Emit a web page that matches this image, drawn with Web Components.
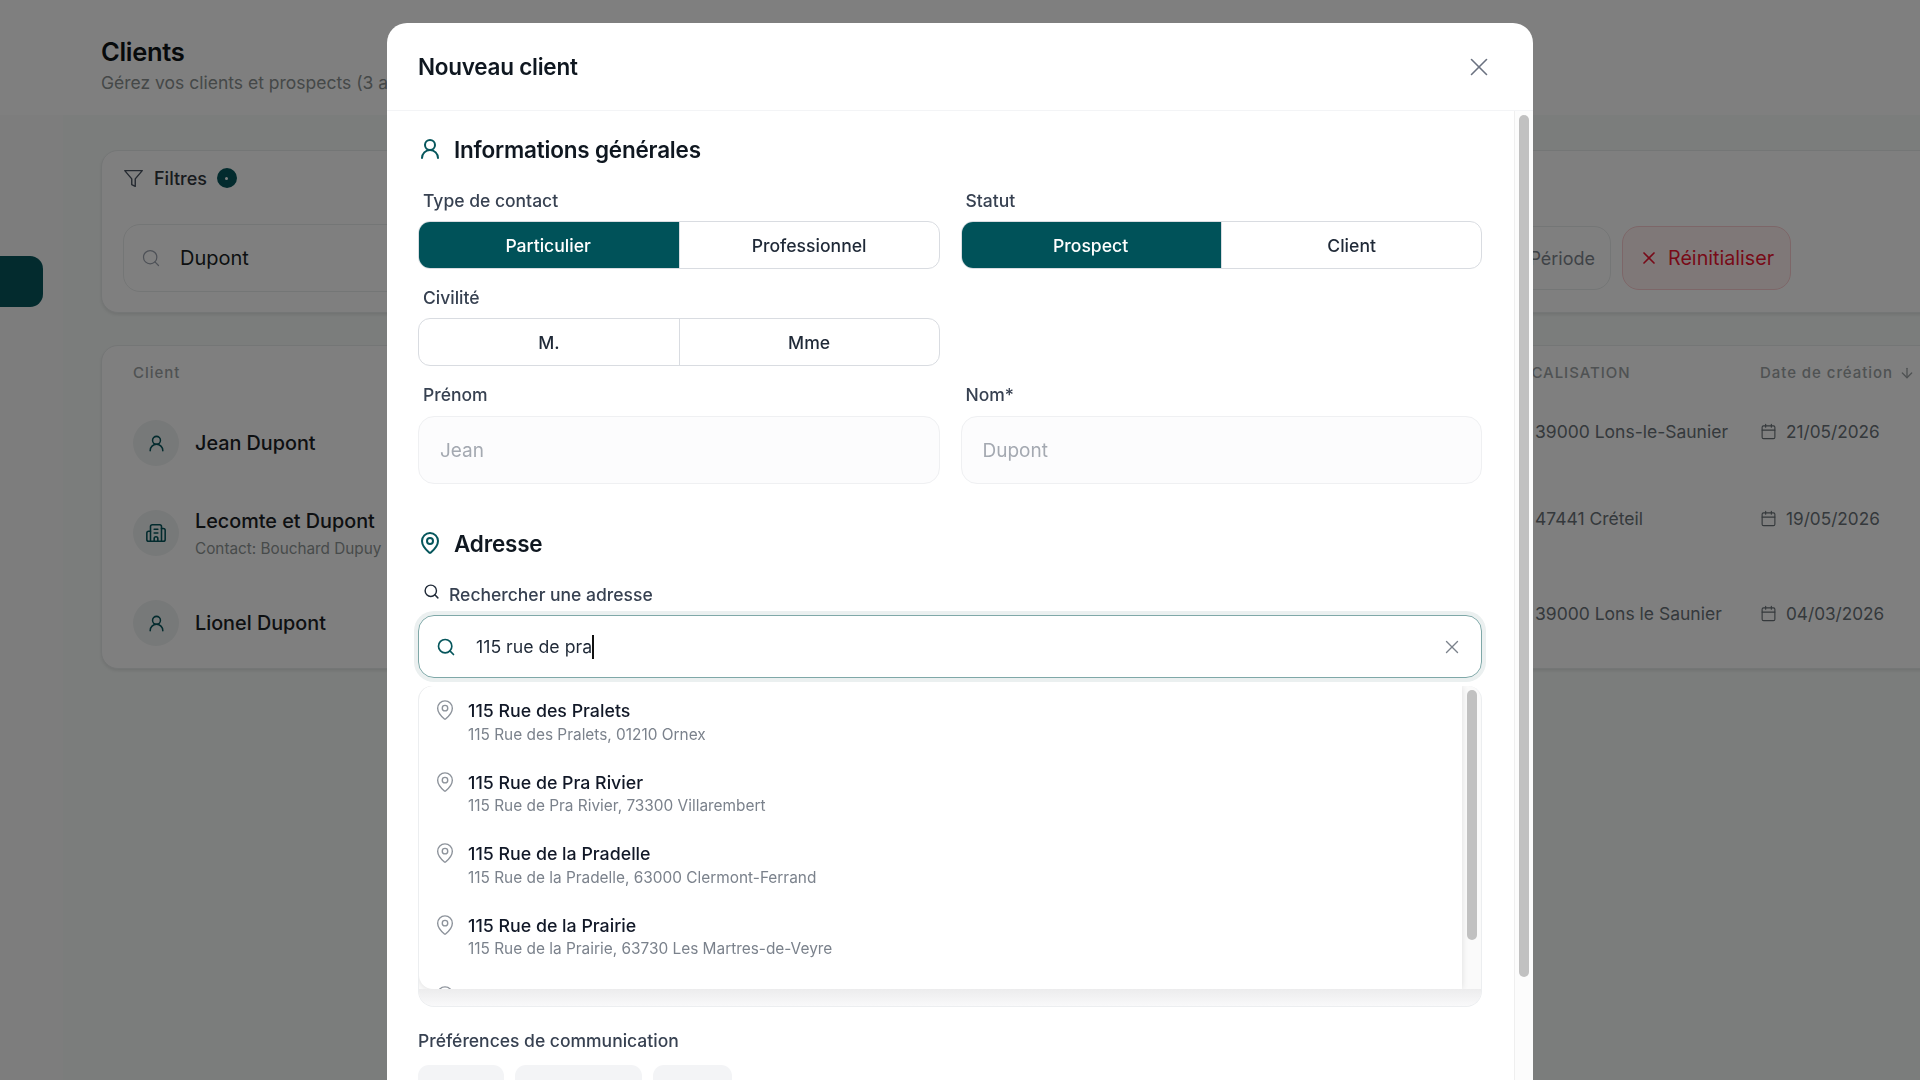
<!DOCTYPE html>
<html lang="fr">
<head>
<meta charset="utf-8">
<title>Clients</title>
<style>
  html, body { margin: 0; height: 1080px; overflow: hidden; background: #fff; }
  body { font-family: Inter, "Liberation Sans", sans-serif; color: #111827; }
</style>
</head>
<body>
<clients-page>
  <client-row slot="rows" name="Jean Dupont" city="39000 Lons-le-Saunier" date="21/05/2026" icon="user" height="88" top="20"></client-row>
  <client-row slot="rows" name="Lecomte et Dupont" contact="Contact: Bouchard Dupuy" city="47441 Créteil" date="19/05/2026" icon="building" height="91" top="19"></client-row>
  <client-row slot="rows" name="Lionel Dupont" city="39000 Lons le Saunier" date="04/03/2026" icon="user" height="90" top="23"></client-row>
</clients-page>

<client-modal heading="Nouveau client">
  <section-heading icon="user">Informations générales</section-heading>
  <div style="display:grid;grid-template-columns:1fr 1fr;column-gap:21px;margin-top:24px">
    <form-field label="Type de contact">
      <seg-group><seg-btn active>Particulier</seg-btn><seg-btn>Professionnel</seg-btn></seg-group>
    </form-field>
    <form-field label="Statut">
      <seg-group><seg-btn active>Prospect</seg-btn><seg-btn>Client</seg-btn></seg-group>
    </form-field>
  </div>
  <div style="display:grid;grid-template-columns:1fr 1fr;column-gap:21px;margin-top:17px">
    <form-field label="Civilité">
      <seg-group><seg-btn>M.</seg-btn><seg-btn>Mme</seg-btn></seg-group>
    </form-field>
  </div>
  <div style="display:grid;grid-template-columns:1fr 1fr;column-gap:21px;margin-top:17px">
    <form-field label="Prénom" gap="9"><text-input>Jean</text-input></form-field>
    <form-field label="Nom*" gap="9"><text-input>Dupont</text-input></form-field>
  </div>
  <section-heading icon="pin" style="margin-top:43px">Adresse</section-heading>
  <address-search value="115 rue de pra" style="margin-top:23px">
    <address-item name="115 Rue des Pralets" detail="115 Rue des Pralets, 01210 Ornex"></address-item>
    <address-item name="115 Rue de Pra Rivier" detail="115 Rue de Pra Rivier, 73300 Villarembert"></address-item>
    <address-item name="115 Rue de la Pradelle" detail="115 Rue de la Pradelle, 63000 Clermont-Ferrand"></address-item>
    <address-item name="115 Rue de la Prairie" detail="115 Rue de la Prairie, 63730 Les Martres-de-Veyre"></address-item>
    <address-item></address-item>
  </address-search>
  <contact-prefs label="Préférences de communication" style="margin-top:22px">
    <span>Email</span><span>Téléphone</span><span>SMS</span>
  </contact-prefs>
</client-modal>

<script>
const ICONS = {
  user: '<circle cx="12" cy="8" r="5"/><path d="M20 21a8 8 0 0 0-16 0"/>',
  pin: '<path d="M20 10c0 4.993-5.539 10.193-7.399 11.799a1 1 0 0 1-1.202 0C9.539 20.193 4 14.993 4 10a8 8 0 0 1 16 0"/><circle cx="12" cy="10" r="3"/>',
  search: '<circle cx="11" cy="11" r="8"/><path d="m21 21-4.3-4.3"/>',
  x: '<path d="M18 6 6 18"/><path d="m6 6 12 12"/>',
  filter: '<polygon points="22 3 2 3 10 12.46 10 19 14 21 14 12.46 22 3"/>',
  calendar: '<path d="M8 2v4"/><path d="M16 2v4"/><rect width="18" height="18" x="3" y="4" rx="2"/><path d="M3 10h18"/>',
  building: '<path d="M10 12h4"/><path d="M10 8h4"/><path d="M14 21v-3a2 2 0 0 0-2-2 2 2 0 0 0-2 2v3"/><path d="M6 10H4a2 2 0 0 0-2 2v7a2 2 0 0 0 2 2h16a2 2 0 0 0 2-2V9a2 2 0 0 0-2-2h-2"/><path d="M6 21V5a2 2 0 0 1 2-2h8a2 2 0 0 1 2 2v16"/>',
  down: '<path d="M12 5v14"/><path d="m19 12-7 7-7-7"/>',
  chevron: '<path d="m6 9 6 6 6-6"/>'
}

class UiIcon extends HTMLElement {
  connectedCallback () {
    const size = this.getAttribute('size') || 20
    const stroke = this.getAttribute('stroke') || 2
    this.attachShadow({ mode: 'open' }).innerHTML = `
      <style>:host { display: inline-flex; flex: none; } svg { display: block; }</style>
      <svg xmlns="http://www.w3.org/2000/svg" width="${size}" height="${size}" viewBox="0 0 24 24" fill="none"
        stroke="currentColor" stroke-width="${stroke}" stroke-linecap="round" stroke-linejoin="round">${ICONS[this.getAttribute('name')]}</svg>`
  }
}

class ClientsPage extends HTMLElement {
  connectedCallback () {
    this.attachShadow({ mode: 'open' }).innerHTML = `
      <style>
        :host { display: grid; grid-template-columns: 63px 1fr; width: 1920px; height: 1080px; overflow: hidden; background: #fbfbfb; }
        .side { display: flex; flex-direction: column; }
        .side .top { width: 43px; height: 107px; background: #f7f7f7; display: flex; align-items: center; justify-content: center; color: #6b7280; box-sizing: border-box; padding-top: 27px; }
        .side .active { width: 43px; height: 51px; margin-top: 149px; background: #06565c; border-radius: 0 13px 13px 0; }
        main { min-width: 0; }
        header { height: 115px; padding: 36px 0 0 101px; box-sizing: border-box; background: #fff; margin-left: -63px; }
        h1 { margin: 0; font-size: 25.5px; line-height: 32px; font-weight: 600; color: #0f1417; letter-spacing: -0.3px; }
        header p { margin: 2px 0 0; font-size: 17.5px; line-height: 26px; color: #8a9191; }
        .content { background: #f6faf8; height: 965px; padding: 35px 0 0 38px; box-sizing: border-box; }
        .card { background: #fff; border: 1px solid #e9ecec; border-radius: 17px; margin-right: -40px; box-shadow: 0 2px 3px rgba(0,0,0,.08); }
        .filters { height: 163px; box-sizing: border-box; padding: 16px 0 0 21px; }
        .filters .head { display: flex; align-items: center; height: 22px; font-size: 18px; color: #30363c; font-weight: 500; }
        .filters .head ui-icon { margin-right: 10px; color: #4b5563; }
        .badge { width: 20px; height: 20px; margin-left: 10px; border-radius: 50%; background: #06565c; display: flex; align-items: center; justify-content: center; }
        .badge i { width: 3px; height: 3px; border-radius: 50%; background: #fff; }
        .filters .row { display: flex; align-items: center; gap: 11px; margin-top: 35px; padding-right: 168px; }
        .search { flex: 1; height: 68px; box-sizing: border-box; border: 1px solid #e9ecec; border-radius: 17px; display: flex; align-items: center; gap: 19px; padding-left: 17px; font-size: 20px; color: #1a1f24; }
        .search ui-icon { color: #9ca3af; }
        .pick { height: 64px; width: 200px; box-sizing: border-box; border: 1px solid #e9ecec; border-radius: 17px; display: flex; align-items: center; justify-content: flex-end; padding-right: 15px; font-size: 18px; color: #7e868e; }
        .reset { height: 64px; width: 169px; box-sizing: border-box; border: 1px solid #fbcdd0; background: #fff1f1; border-radius: 17px; display: flex; align-items: center; gap: 9px; padding-left: 16px; font-size: 19.7px; color: #f01530; }
        .table { height: 322px; margin-top: 32px; overflow: hidden; }
        .cols { display: grid; grid-template-columns: 1377px 250px 1fr; height: 53px; align-items: center; padding-left: 31px; font-size: 15px; font-weight: 500; letter-spacing: .95px; color: #9ea4a6; }
        .cols span:last-child { display: flex; align-items: center; gap: 6px; }
      </style>
      <div class="side">
        <div class="top"><ui-icon name="chevron" size="18" stroke="1.5"></ui-icon></div>
        <div class="active"></div>
      </div>
      <main>
        <header><h1>Clients</h1><p>Gérez vos clients et prospects (3 au total)</p></header>
        <div class="content">
          <div class="card filters">
            <div class="head"><ui-icon name="filter" size="21" stroke="1.6"></ui-icon>Filtres<span class="badge"><i></i></span></div>
            <div class="row">
              <div class="search"><ui-icon name="search" size="20" stroke="1.5"></ui-icon>Dupont</div>
              <div class="pick">Période</div>
              <div class="reset"><ui-icon name="x" size="20"></ui-icon>Réinitialiser</div>
            </div>
          </div>
          <div class="card table">
            <div class="cols"><span>Client</span><span>LOCALISATION</span><span>Date de création <ui-icon name="down" size="16"></ui-icon></span></div>
            <slot name="rows"></slot>
          </div>
        </div>
      </main>`
  }
}

class ClientRow extends HTMLElement {
  connectedCallback () {
    const a = n => this.getAttribute(n)
    const building = a('icon') === 'building'
    this.attachShadow({ mode: 'open' }).innerHTML = `
      <style>
        :host { display: grid; grid-template-columns: 1377px 250px 1fr; padding-left: 31px; height: ${a('height')}px; }
        .who { display: flex; align-items: center; gap: 16px; }
        .avatar { width: 46px; height: 46px; border-radius: 50%; background: #eff2f2; color: #06565c; display: flex; align-items: center; justify-content: center; }
        .name { font-size: 19.8px; line-height: 28px; font-weight: 500; color: #1a2024; }
        .contact { font-size: 15.3px; line-height: 20px; margin-top: 4px; color: #8f9696; }
        .cell { display: flex; align-items: center; gap: 7px; height: 24px; margin-top: ${a('top')}px; font-size: 17.5px; color: #6a7278; }
        .date { gap: 9px; font-size: 17.2px; }
      </style>
      <div class="who">
        <div class="avatar"><ui-icon name="${a('icon')}" size="${building ? 22 : 19}" stroke="${building ? 1.7 : 1.9}"></ui-icon></div>
        <div><div class="name">${a('name')}</div>${a('contact') ? `<div class="contact">${a('contact')}</div>` : ''}</div>
      </div>
      <div class="cell"><ui-icon name="pin" size="18"></ui-icon>${a('city')}</div>
      <div class="cell date"><ui-icon name="calendar" size="17" stroke="1.6"></ui-icon>${a('date')}</div>`
  }
}

class ClientModal extends HTMLElement {
  connectedCallback () {
    this.attachShadow({ mode: 'open' }).innerHTML = `
      <style>
        :host { position: fixed; inset: 0; display: flex; justify-content: center; padding-top: 23px; box-sizing: border-box; background: rgba(0, 0, 0, .5); }
        .dialog { width: 1146px; height: 1100px; background: #fff; border-radius: 20px 20px 0 0; display: flex; flex-direction: column; overflow: hidden; }
        header { height: 88px; flex: none; box-sizing: border-box; border-bottom: 1px solid #f3f4f6; display: flex; align-items: center; justify-content: space-between; padding: 0 39px 0 31px; }
        h2 { margin: 0; font-size: 22.5px; font-weight: 600; color: #0f1720; letter-spacing: -0.25px; }
        header ui-icon { color: #6b7280; }
        .body { flex: 1; display: flex; min-height: 0; }
        .scroll { flex: 1; min-width: 0; padding: 22px 32px 0 31px; box-sizing: border-box; }
        .track { width: 19px; flex: none; box-sizing: border-box; border-left: 1px solid #efefef; background: #fcfcfc; padding: 4px 4px 0; }
        .thumb { height: 862px; border-radius: 5px; background: #c1c1c1; }
      </style>
      <div class="dialog">
        <header><h2>${this.getAttribute('heading')}</h2><ui-icon name="x" size="30" stroke="1.3"></ui-icon></header>
        <div class="body">
          <div class="scroll"><slot></slot></div>
          <div class="track"><div class="thumb"></div></div>
        </div>
      </div>`
  }
}

class SectionHeading extends HTMLElement {
  connectedCallback () {
    this.attachShadow({ mode: 'open' }).innerHTML = `
      <style>
        :host { display: flex; align-items: center; gap: 12px; height: 32px; font-size: 22.5px; font-weight: 600; color: #0f1720; letter-spacing: -0.2px; }
        ui-icon { color: #06565c; }
      </style>
      <ui-icon name="${this.getAttribute('icon')}" size="24"></ui-icon><slot></slot>`
  }
}

class FormField extends HTMLElement {
  connectedCallback () {
    this.attachShadow({ mode: 'open' }).innerHTML = `
      <style>
        :host { display: block; }
        label { display: block; height: 24px; line-height: 24px; padding-left: 5px; margin-bottom: ${this.getAttribute('gap') || 8}px; font-size: 17.5px; font-weight: 500; color: #374151; }
      </style>
      <label>${this.getAttribute('label')}</label><slot></slot>`
  }
}

class SegGroup extends HTMLElement {
  connectedCallback () {
    this.attachShadow({ mode: 'open' }).innerHTML = `
      <style>
        :host { display: grid; grid-template-columns: 1fr 1fr; height: 48px; box-sizing: border-box; border: 1.5px solid #d9dce1; border-radius: 12px; overflow: hidden; }
      </style>
      <slot></slot>`
  }
}

class SegBtn extends HTMLElement {
  connectedCallback () {
    this.attachShadow({ mode: 'open' }).innerHTML = `
      <style>
        :host { display: flex; align-items: center; justify-content: center; font-size: 17.6px; font-weight: 500; color: #1f2937; }
        :host(:nth-child(2)) { border-left: 1px solid #d9dce1; }
        :host([active]) { background: #005259; color: #fff; margin: -1.5px 0 -1.5px -1.5px; }
      </style>
      <slot></slot>`
  }
}

class TextInput extends HTMLElement {
  connectedCallback () {
    this.attachShadow({ mode: 'open' }).innerHTML = `
      <style>
        :host { display: flex; align-items: center; height: 68px; box-sizing: border-box; padding-left: 21px; background: #fcfcfd; border: 1.5px solid #eff0f2; border-radius: 16px; font-size: 19px; color: #a4a9b1; }
      </style>
      <slot></slot>`
  }
}

class AddressSearch extends HTMLElement {
  connectedCallback () {
    this.attachShadow({ mode: 'open' }).innerHTML = `
      <style>
        :host { display: block; }
        .label { display: flex; align-items: center; gap: 9px; height: 24px; padding-left: 5px; font-size: 17.5px; font-weight: 500; color: #374151; }
        .label ui-icon { margin-top: -6px; color: #1f2937; }
        .input { display: flex; align-items: center; height: 63px; margin-top: 9px; box-sizing: border-box; border: 1.5px solid #7fa8a8; border-radius: 16px; box-shadow: 0 0 0 4px #ebf0f0; padding: 0 18px 0 17px; font-size: 17.7px; color: #1f2937; }
        .input .lead { color: #06565c; margin-right: 20px; }
        .input .value { flex: 1; display: flex; align-items: center; }
        .caret { width: 1.5px; height: 24px; background: #111; }
        .input .clear { color: #7b828c; }
        .box { margin-top: 8px; border: 1px solid #eceef0; border-top: 0; border-radius: 14px 14px 16px 16px; display: grid; grid-template-columns: 1fr 19px; grid-template-rows: 303px 17px; overflow: hidden; background: #fafafa; }
        .list { overflow: hidden; background: #fff; box-shadow: 0 0 6px rgba(0,0,0,.12); border-radius: 14px 0 0 14px; }
        .v { padding: 4px 4px 0 5px; }
        .thumb { height: 250px; border-radius: 5px; background: #c1c1c1; }
        .h { grid-column: 1 / 3; background: linear-gradient(#ececed, #f9f9fa); }
      </style>
      <div class="label"><ui-icon name="search" size="17" stroke="2"></ui-icon>Rechercher une adresse</div>
      <div class="input">
        <ui-icon class="lead" name="search" size="20"></ui-icon>
        <div class="value">${this.getAttribute('value')}<span class="caret"></span></div>
        <ui-icon class="clear" name="x" size="22" stroke="1.5"></ui-icon>
      </div>
      <div class="box">
        <div class="list"><slot></slot></div>
        <div class="v"><div class="thumb"></div></div>
        <div class="h"></div>
      </div>`
  }
}

class AddressItem extends HTMLElement {
  connectedCallback () {
    const name = this.getAttribute('name') || ''
    const detail = this.getAttribute('detail') || ''
    this.attachShadow({ mode: 'open' }).innerHTML = `
      <style>
        :host { display: flex; gap: 12px; height: 71.6px; box-sizing: border-box; padding: 13px 0 0 15px; }
        ui-icon { color: #8d939b; }
        .n { height: 24px; line-height: 24px; font-size: 17.8px; font-weight: 500; color: #111827; }
        .d { height: 20px; line-height: 20px; margin-top: 1.6px; font-size: 15.4px; color: #7b828c; }
      </style>
      <ui-icon name="pin" size="22" stroke="1.5"></ui-icon>
      <div><div class="n">${name}</div><div class="d">${detail}</div></div>`
  }
}

class ContactPrefs extends HTMLElement {
  connectedCallback () {
    this.attachShadow({ mode: 'open' }).innerHTML = `
      <style>
        :host { display: block; }
        .label { height: 24px; line-height: 24px; font-size: 17.5px; font-weight: 500; color: #374151; }
        .pills { display: flex; gap: 11px; margin-top: 12px; }
        ::slotted(span) { height: 44px; line-height: 50px; padding: 0 21px; background: #f3f4f6; border-radius: 11px; font-size: 17px; color: #374151; font-weight: 500; }
      </style>
      <div class="label">${this.getAttribute('label')}</div>
      <div class="pills"><slot></slot></div>`
  }
}

customElements.define('ui-icon', UiIcon)
customElements.define('clients-page', ClientsPage)
customElements.define('client-row', ClientRow)
customElements.define('client-modal', ClientModal)
customElements.define('section-heading', SectionHeading)
customElements.define('form-field', FormField)
customElements.define('seg-group', SegGroup)
customElements.define('seg-btn', SegBtn)
customElements.define('text-input', TextInput)
customElements.define('address-search', AddressSearch)
customElements.define('address-item', AddressItem)
customElements.define('contact-prefs', ContactPrefs)
</script>
</body>
</html>
